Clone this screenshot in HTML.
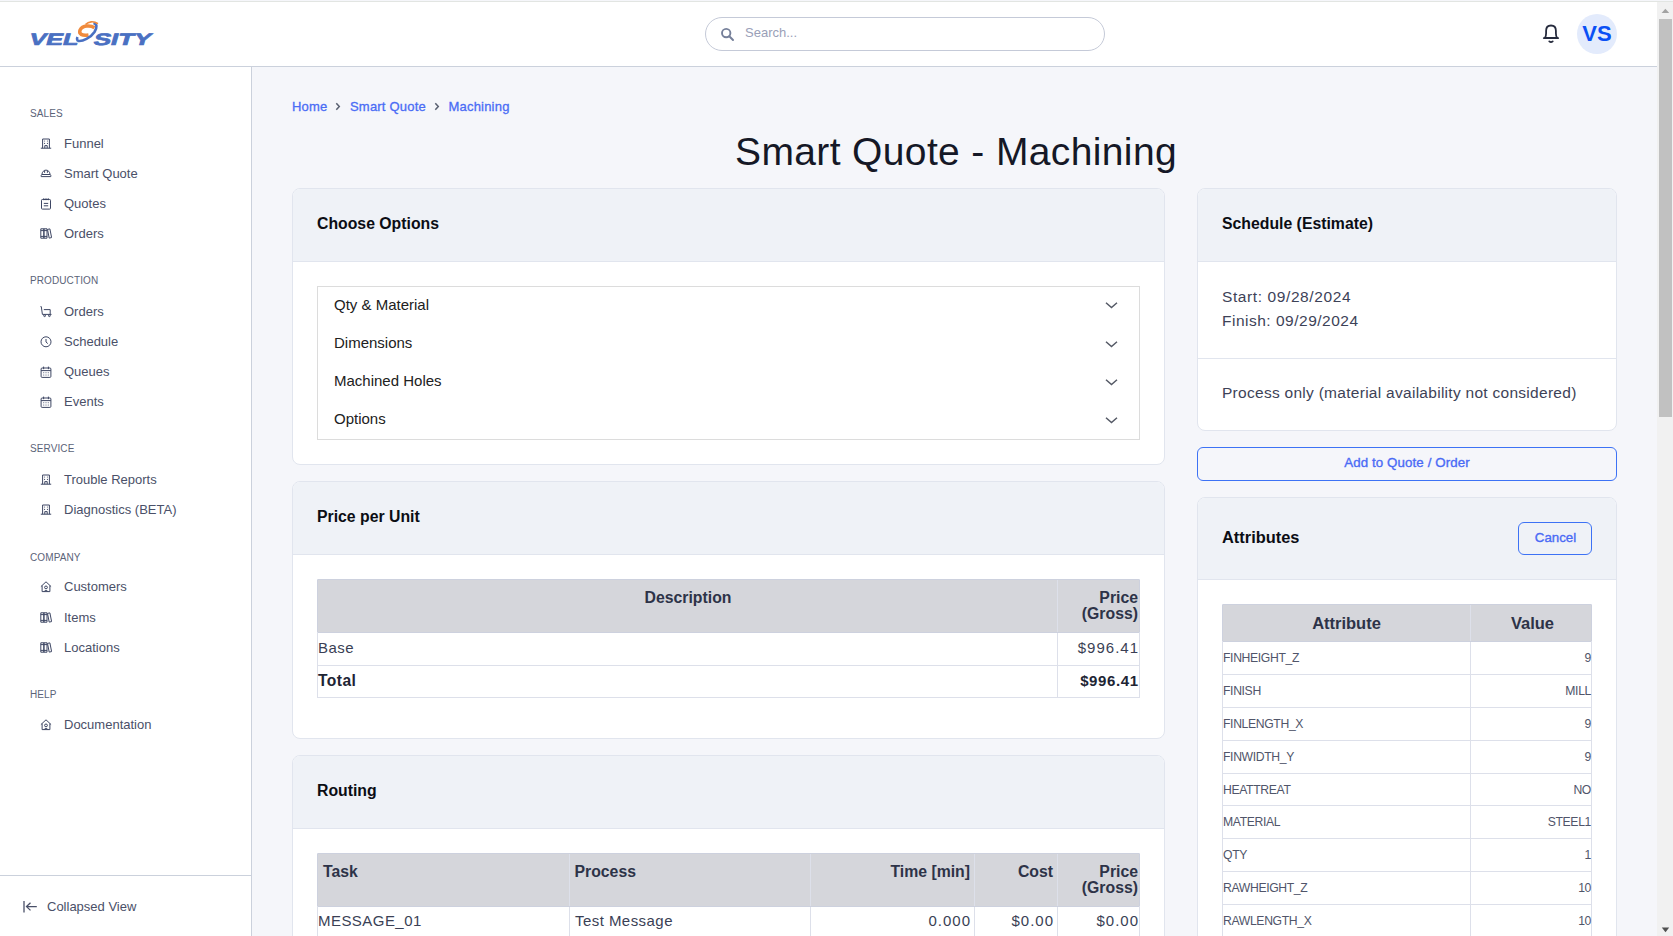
<!DOCTYPE html>
<html><head><meta charset="utf-8">
<style>
*{box-sizing:border-box;margin:0;padding:0}
html,body{width:1673px;height:936px;overflow:hidden;background:#f5f6fa;font-family:"Liberation Sans",sans-serif}
.abs{position:absolute}
#topline{left:0;top:1px;width:1673px;height:1px;background:#e2e5e2}
#header{left:0;top:2px;width:1657px;height:64px;background:#fff}
#hborder{left:0;top:66px;width:1657px;height:1px;background:#cbd1dc}
#sidebar{left:0;top:67px;width:251px;height:869px;background:#fff}
#sborder{left:251px;top:67px;width:1px;height:869px;background:#cbd1dc}
#scroll{left:1657px;top:2px;width:16px;height:934px;background:#f1f1f1}
#thumb{left:1659px;top:19px;width:13px;height:398px;background:#c1c1c1}
.cap{position:absolute;left:30px;font-size:10px;color:#5b6378;letter-spacing:0.1px}
.nav{position:absolute;left:64px;font-size:13px;color:#4a5068;white-space:nowrap}
.ico{position:absolute;left:40px;width:12px;height:12px}
.card{position:absolute;background:#fff;border:1px solid #e1e5ee;border-radius:8px;overflow:hidden}
.chead{position:absolute;left:0;top:0;right:0;background:#eff2f7;border-bottom:1px solid #e1e5ee}
.ctitle{position:absolute;left:24px;font-size:15.8px;font-weight:bold;color:#0b0d14;white-space:nowrap}
.bc{font-size:13px;letter-spacing:0.2px;color:#4a6cf5;-webkit-text-stroke:0.3px #4a6cf5;white-space:nowrap}
.accbox{}
.acc{position:absolute;left:41px;font-size:15px;color:#212121;white-space:nowrap}
.chev{position:absolute;left:812px;margin-top:-1px;width:13px;height:8px;fill:none;stroke:#555a66;stroke-width:1.5}
.tbl{position:absolute;border:1px solid #dde0ea}
.th{position:absolute;background:#d5d6db;box-shadow:0 -1px 0 #cdd1de,-1px 0 0 #cdd1de,1px 0 0 #cdd1de}
.vl{position:absolute;width:1px;background:#dde0ea}
.hl{position:absolute;height:1px;background:#dde0ea}
.tht{position:absolute;font-size:15.8px;font-weight:bold;color:#2d3348;line-height:16px;white-space:nowrap}
.td{position:absolute;font-size:15px;color:#3a3f55;white-space:nowrap;letter-spacing:0.45px}
.num{letter-spacing:1px}
.td.b{font-weight:bold;color:#202433}
.st{position:absolute;left:24px;font-size:15.5px;color:#3d4257;white-space:nowrap}
.btxt{font-size:13.3px;letter-spacing:0.1px;-webkit-text-stroke:0.35px #4a6af5;color:#4a6af5;white-space:nowrap}
.ta{position:absolute;font-size:12.2px;letter-spacing:-0.35px;color:#50556a;white-space:nowrap}
</style></head><body>
<div id="topline" class="abs"></div>
<div id="header" class="abs"></div>
<div id="hborder" class="abs"></div>
<div id="sidebar" class="abs"></div>
<div id="sborder" class="abs"></div>
<div id="scroll" class="abs"></div>
<div id="thumb" class="abs"></div>
<svg class="abs" style="left:1657px;top:0" width="16" height="936" viewBox="0 0 16 936"><path d="M4.6 13H12.2L8.4 8.8Z" fill="#a3a3a3"/><path d="M4.8 927.6H12.2L8.5 932.2Z" fill="#505050"/></svg>


<!-- logo -->
<svg class="abs" style="left:20px;top:14px" width="145" height="36" viewBox="0 0 145 36">
  <g fill="#4a70c2" stroke="#4a70c2" stroke-width="0.7" font-family="Liberation Sans" font-weight="bold" font-size="16.6">
    <g transform="translate(0,30.6) skewX(-16)">
      <text x="8.2" y="0" textLength="49" lengthAdjust="spacingAndGlyphs">VEL</text>
      <text x="72.5" y="0" textLength="57.5" lengthAdjust="spacingAndGlyphs">SITY</text>
    </g>
  </g>
  <g transform="translate(7.5,0.5)"><path d="M67 13.2 C63 10.6, 55 10.6, 52.6 15.5 C50.9 19.6, 54.5 21.4, 61 20.4" fill="none" stroke="#f08a3c" stroke-width="3.5"/>
  <path d="M66 8.5 C69.5 9.5, 70 12.5, 67 17.5 C63 23.5, 55 27, 51 26.5 C49 26, 49.5 23.5, 50 22.5" fill="none" stroke="#4a70c2" stroke-width="2.6"/>
  <path d="M58 10 C61 7, 66 6, 70.4 9.3" fill="none" stroke="#f08a3c" stroke-width="1.7"/></g>
</svg>
<!-- search -->
<div class="abs" style="left:705px;top:17px;width:400px;height:34px;border:1px solid #c5cad8;border-radius:17px;background:#fff"></div>
<svg class="abs" style="left:719px;top:26px" width="18" height="18" viewBox="0 0 18 18">
  <circle cx="7.2" cy="7.1" r="4.2" fill="none" stroke="#76809a" stroke-width="1.9"/>
  <line x1="10.3" y1="10.3" x2="14" y2="14" stroke="#76809a" stroke-width="2" stroke-linecap="round"/>
</svg>
<div class="abs" style="left:745px;top:25px;font-size:13px;color:#9aa0b8;white-space:nowrap">Search...</div>
<!-- bell -->
<svg class="abs" style="left:1540px;top:22px" width="22" height="24" viewBox="0 0 22 24">
  <path d="M4.9 15.9 C5.9 14.6 6.1 13.3 6.1 11.3 L6.1 8.8 C6.1 5.6 8 3.5 11 3.5 C14 3.5 15.9 5.6 15.9 8.8 L15.9 11.3 C15.9 13.3 16.1 14.6 17.1 15.9 Z" fill="none" stroke="#262b3d" stroke-width="1.8" stroke-linejoin="round"/>
  <path d="M3.8 16.1 L18.2 16.1" stroke="#262b3d" stroke-width="1.8" stroke-linecap="round"/>
  <path d="M9.3 19.4 Q11 20.9 12.7 19.4" fill="none" stroke="#262b3d" stroke-width="1.8" stroke-linecap="round"/>
</svg>
<!-- avatar -->
<div class="abs" style="left:1577px;top:14px;width:40px;height:40px;border-radius:50%;background:#e3ebfc"></div>
<div class="abs" style="left:1577px;top:21px;width:40px;text-align:center;font-size:22px;font-weight:bold;color:#0a50f5;letter-spacing:0px">VS</div>

<svg width="0" height="0" style="position:absolute">
<defs>
<g id="i-bld" fill="none" stroke="#3e4764" stroke-width="1"><path d="M2.6 10.2V1H9.4V10.2M0.8 10.2H11.2M4.8 10.2V7.6H7.2V10.2"/><g fill="#3e4764" stroke="none"><circle cx="4.6" cy="3" r="0.55"/><circle cx="7.4" cy="3" r="0.55"/><circle cx="4.6" cy="5.4" r="0.55"/><circle cx="7.4" cy="5.4" r="0.55"/></g></g>
<g id="i-helm" fill="none" stroke="#3e4764" stroke-width="1"><path d="M1.2 8.6H10.8C11 7.4 10.7 6.8 10.1 6.5C9.9 3.9 8.1 2.1 6 2.1C3.9 2.1 2.1 3.9 1.9 6.5C1.3 6.8 1 7.4 1.2 8.6Z"/><path d="M4.6 2.5V4.8M7.4 2.5V4.8M1.9 6.5H10.1"/></g>
<g id="i-note" fill="none" stroke="#3e4764" stroke-width="1"><rect x="1.5" y="1.5" width="9" height="9.6" rx="0.8"/><path d="M3.8 0.2V2.2M6 0.2V2.2M8.2 0.2V2.2M3.8 5.4H8.2M3.8 7.8H8.2"/></g>
<g id="i-book" fill="none" stroke="#3e4764" stroke-width="1"><path d="M0.8 0.8H3.9V10.2H0.8ZM3.9 0.8H7V10.2H3.9ZM7.5 1.4L9.9 0.9L11.6 9.6L9.2 10.1Z M0.8 2.6H7M0.8 8.4H7"/></g>
<g id="i-cart" fill="none" stroke="#3e4764" stroke-width="1"><path d="M0.5 0.6H1.3L2.4 8.4H11.5M3.8 3.6H10.2V8.4"/><circle cx="4.6" cy="9.7" r="0.9"/><circle cx="9.4" cy="9.7" r="0.9"/></g>
<g id="i-clock" fill="none" stroke="#3e4764" stroke-width="1"><circle cx="6" cy="5.8" r="5"/><path d="M6 3V6L7.8 7.6"/></g>
<g id="i-cal" fill="none" stroke="#3e4764" stroke-width="1"><rect x="1.1" y="2" width="9.8" height="9.4" rx="1"/><path d="M3.6 0.6V3.2M8.4 0.6V3.2M1.1 4.6H10.9"/><g fill="#3e4764" stroke="none"><rect x="3.3" y="6.3" width="0.9" height="0.9"/><rect x="5.55" y="6.3" width="0.9" height="0.9"/><rect x="7.8" y="6.3" width="0.9" height="0.9"/><rect x="3.3" y="8.6" width="0.9" height="0.9"/><rect x="5.55" y="8.6" width="0.9" height="0.9"/><rect x="7.8" y="8.6" width="0.9" height="0.9"/></g></g>
<g id="i-home" fill="none" stroke="#3e4764" stroke-width="1"><path d="M0.9 5.6L6 0.8L11.1 5.6M2.1 4.6V10.6H9.9V4.6"/><circle cx="6" cy="6.4" r="1.4"/><path d="M4.2 10.6C4.2 9.2 7.8 9.2 7.8 10.6"/></g>
</defs></svg>
<!-- sidebar items -->
<div class="cap" style="top:106.8px;margin-top:0.8px">SALES</div>
<svg class="ico" style="top:138.1px" viewBox="0 0 12 12"><use href="#i-bld"/></svg><div class="nav" style="top:136.3px">Funnel</div>
<svg class="ico" style="top:168.1px" viewBox="0 0 12 12"><use href="#i-helm"/></svg><div class="nav" style="top:166.3px">Smart Quote</div>
<svg class="ico" style="top:197.9px" viewBox="0 0 12 12"><use href="#i-note"/></svg><div class="nav" style="top:196.1px">Quotes</div>
<svg class="ico" style="top:227.8px" viewBox="0 0 12 12"><use href="#i-book"/></svg><div class="nav" style="top:226.0px">Orders</div>
<div class="cap" style="top:274.3px;margin-top:0.8px">PRODUCTION</div>
<svg class="ico" style="top:306.0px" viewBox="0 0 12 12"><use href="#i-cart"/></svg><div class="nav" style="top:304.2px">Orders</div>
<svg class="ico" style="top:335.6px" viewBox="0 0 12 12"><use href="#i-clock"/></svg><div class="nav" style="top:333.8px">Schedule</div>
<svg class="ico" style="top:365.8px" viewBox="0 0 12 12"><use href="#i-cal"/></svg><div class="nav" style="top:364.0px">Queues</div>
<svg class="ico" style="top:396.0px" viewBox="0 0 12 12"><use href="#i-cal"/></svg><div class="nav" style="top:394.2px">Events</div>
<div class="cap" style="top:442.5px;margin-top:0.8px">SERVICE</div>
<svg class="ico" style="top:473.5px" viewBox="0 0 12 12"><use href="#i-bld"/></svg><div class="nav" style="top:471.7px">Trouble Reports</div>
<svg class="ico" style="top:503.5px" viewBox="0 0 12 12"><use href="#i-bld"/></svg><div class="nav" style="top:501.7px">Diagnostics (BETA)</div>
<div class="cap" style="top:551.0px;margin-top:0.8px">COMPANY</div>
<svg class="ico" style="top:581.1px" viewBox="0 0 12 12"><use href="#i-home"/></svg><div class="nav" style="top:579.3px">Customers</div>
<svg class="ico" style="top:611.6px" viewBox="0 0 12 12"><use href="#i-book"/></svg><div class="nav" style="top:609.8px">Items</div>
<svg class="ico" style="top:642.0px" viewBox="0 0 12 12"><use href="#i-book"/></svg><div class="nav" style="top:640.2px">Locations</div>
<div class="cap" style="top:687.8px;margin-top:0.8px">HELP</div>
<svg class="ico" style="top:718.9px" viewBox="0 0 12 12"><use href="#i-home"/></svg><div class="nav" style="top:717.1px">Documentation</div>
<div class="abs" style="left:0;top:875px;width:251px;height:1px;background:#cbd1dc"></div>
<svg class="abs" style="left:20px;top:898px" width="20" height="18" viewBox="0 0 20 18"><path d="M4 3V14.5M16.8 8.6H6.5M10.5 4.8L6.5 8.6L10.5 12.4" fill="none" stroke="#4a5068" stroke-width="1.3"/></svg>
<div class="nav" style="left:47px;top:899.4px">Collapsed View</div>
<!-- main title -->
<div class="abs bc" style="left:292px;top:99px">Home</div>
<svg class="abs" style="left:334px;top:102px" width="8" height="9" viewBox="0 0 8 9"><path d="M2.3 1.2L5.3 4.5L2.3 7.8" fill="none" stroke="#596070" stroke-width="1.5"/></svg>
<div class="abs bc" style="left:350px;top:99px">Smart Quote</div>
<svg class="abs" style="left:433px;top:102px" width="8" height="9" viewBox="0 0 8 9"><path d="M2.3 1.2L5.3 4.5L2.3 7.8" fill="none" stroke="#596070" stroke-width="1.5"/></svg>
<div class="abs bc" style="left:448.5px;top:99px">Machining</div>
<div class="abs" style="left:735px;top:130px;font-size:39px;letter-spacing:0.37px;color:#151826;white-space:nowrap">Smart Quote - Machining</div>

<!-- card 1 -->
<div class="card" style="left:292px;top:188px;width:873px;height:277px">
  <div class="chead" style="height:73px"><div class="ctitle" style="top:25.5px">Choose Options</div></div>
  <div class="abs" style="left:24px;top:97px;width:823px;height:154px;border:1px solid #dcdcdc"></div>
  <div class="acc" style="top:107px">Qty &amp; Material</div>
  <div class="acc" style="top:145px">Dimensions</div>
  <div class="acc" style="top:183px">Machined Holes</div>
  <div class="acc" style="top:221px">Options</div>
  <svg class="chev" style="top:113px" viewBox="0 0 13 8"><path d="M1 1.8L6.5 6.6L12 1.8"/></svg>
  <svg class="chev" style="top:151.5px" viewBox="0 0 13 8"><path d="M1 1.8L6.5 6.6L12 1.8"/></svg>
  <svg class="chev" style="top:189.5px" viewBox="0 0 13 8"><path d="M1 1.8L6.5 6.6L12 1.8"/></svg>
  <svg class="chev" style="top:227.5px" viewBox="0 0 13 8"><path d="M1 1.8L6.5 6.6L12 1.8"/></svg>
</div>

<!-- card 2 -->
<div class="card" style="left:292px;top:481px;width:873px;height:258px">
  <div class="chead" style="height:73px"><div class="ctitle" style="top:25.5px">Price per Unit</div></div>
  <div class="tbl" style="left:24px;top:97px;width:823px;height:119px">
    <div class="th" style="left:0;top:0;width:821px;height:52px"></div>
    <div class="vl" style="left:739px;top:0;height:117px"></div>
    <div class="hl" style="left:0;top:52px;width:821px;background:#cdd1de"></div>
    <div class="hl" style="left:0;top:85px;width:821px"></div>
    <div class="tht" style="left:0;top:10px;width:740px;text-align:center">Description</div>
    <div class="tht" style="left:740px;top:10px;width:80px;text-align:right">Price<br>(Gross)</div>
    <div class="td" style="left:0px;top:58.5px">Base</div>
    <div class="td num" style="left:740px;top:59px;width:81px;text-align:right">$996.41</div>
    <div class="td b" style="left:0px;top:92px;font-size:15.6px">Total</div>
    <div class="td b num" style="left:740px;top:92px;width:80.6px;text-align:right;letter-spacing:0.6px">$996.41</div>
  </div>
</div>

<!-- card 3 -->
<div class="card" style="left:292px;top:755px;width:873px;height:300px">
  <div class="chead" style="height:73px"><div class="ctitle" style="top:25.5px">Routing</div></div>
  <div class="tbl" style="left:24px;top:97px;width:823px;height:200px">
    <div class="th" style="left:0;top:0;width:821px;height:52px"></div>
    <div class="vl" style="left:251px;top:0;height:198px"></div>
    <div class="vl" style="left:492px;top:0;height:198px"></div>
    <div class="vl" style="left:656px;top:0;height:198px"></div>
    <div class="vl" style="left:739px;top:0;height:198px"></div>
    <div class="hl" style="left:0;top:52px;width:821px;background:#cdd1de"></div>
    <div class="tht" style="left:5px;top:10px">Task</div>
    <div class="tht" style="left:256.5px;top:10px">Process</div>
    <div class="tht" style="left:493px;top:10px;width:159px;text-align:right">Time [min]</div>
    <div class="tht" style="left:657px;top:10px;width:78px;text-align:right">Cost</div>
    <div class="tht" style="left:740px;top:10px;width:80px;text-align:right">Price<br>(Gross)</div>
    <div class="td" style="left:0px;top:58px">MESSAGE_01</div>
    <div class="td" style="left:257px;top:58px">Test Message</div>
    <div class="td num" style="left:493px;top:58px;width:160px;text-align:right">0.000</div>
    <div class="td num" style="left:657px;top:58px;width:79px;text-align:right">$0.00</div>
    <div class="td num" style="left:740px;top:58px;width:81px;text-align:right">$0.00</div>
  </div>
</div>

<!-- right: schedule -->
<div class="card" style="left:1197px;top:188px;width:420px;height:243px">
  <div class="chead" style="height:73px"><div class="ctitle" style="top:25.5px">Schedule (Estimate)</div></div>
  <div class="st" style="top:99px;letter-spacing:0.6px">Start: 09/28/2024</div>
  <div class="st" style="top:123px;letter-spacing:0.5px">Finish: 09/29/2024</div>
  <div class="hl" style="left:0;top:169px;width:420px;background:#e1e5ee"></div>
  <div class="st" style="top:195px;letter-spacing:0.28px">Process only (material availability not considered)</div>
</div>
<div class="abs" style="left:1197px;top:447px;width:420px;height:34px;border:1px solid #3d72f5;border-radius:6px"></div>
<div class="abs btxt" style="left:1197px;top:455px;width:420px;text-align:center">Add to Quote / Order</div>

<!-- right: attributes -->
<div class="card" style="left:1197px;top:497px;width:420px;height:520px">
  <div class="chead" style="height:82px"><div class="ctitle" style="top:30px;font-size:16.4px">Attributes</div></div>
  <div class="abs" style="left:320px;top:24px;width:74px;height:33px;border:1px solid #3d72f5;border-radius:6px;background:#eff2f7"></div>
  <div class="abs btxt" style="left:320.5px;top:31.5px;letter-spacing:0;width:74px;text-align:center">Cancel</div>
  <div class="tbl" style="left:24px;top:106px;width:370px;height:420px">
    <div class="th" style="left:0;top:0;width:368px;height:36px"></div>
    <div class="vl" style="left:247px;top:0;height:420px"></div>
    <div class="hl" style="left:0;top:36px;width:368px;background:#cdd1de"></div>
    <div class="tht" style="left:0;top:9.5px;width:247px;text-align:center;font-size:16.5px">Attribute</div>
    <div class="tht" style="left:249px;top:9.5px;width:121px;text-align:center;font-size:16.5px">Value</div>
    <div class="hl" style="left:0;top:69px;width:368px"></div>
    <div class="ta" style="left:0px;top:45.5px">FINHEIGHT_Z</div><div class="ta" style="left:247px;top:45.5px;width:121px;text-align:right">9</div>
    <div class="hl" style="left:0;top:102px;width:368px"></div>
    <div class="ta" style="left:0px;top:78.5px">FINISH</div><div class="ta" style="left:247px;top:78.5px;width:121px;text-align:right">MILL</div>
    <div class="hl" style="left:0;top:135px;width:368px"></div>
    <div class="ta" style="left:0px;top:111.5px">FINLENGTH_X</div><div class="ta" style="left:247px;top:111.5px;width:121px;text-align:right">9</div>
    <div class="hl" style="left:0;top:168px;width:368px"></div>
    <div class="ta" style="left:0px;top:144.5px">FINWIDTH_Y</div><div class="ta" style="left:247px;top:144.5px;width:121px;text-align:right">9</div>
    <div class="hl" style="left:0;top:200px;width:368px"></div>
    <div class="ta" style="left:0px;top:177.5px">HEATTREAT</div><div class="ta" style="left:247px;top:177.5px;width:121px;text-align:right">NO</div>
    <div class="hl" style="left:0;top:233px;width:368px"></div>
    <div class="ta" style="left:0px;top:209.5px">MATERIAL</div><div class="ta" style="left:247px;top:209.5px;width:121px;text-align:right">STEEL1</div>
    <div class="hl" style="left:0;top:266px;width:368px"></div>
    <div class="ta" style="left:0px;top:242.5px">QTY</div><div class="ta" style="left:247px;top:242.5px;width:121px;text-align:right">1</div>
    <div class="hl" style="left:0;top:299px;width:368px"></div>
    <div class="ta" style="left:0px;top:275.5px">RAWHEIGHT_Z</div><div class="ta" style="left:247px;top:275.5px;width:121px;text-align:right">10</div>
    <div class="hl" style="left:0;top:332px;width:368px"></div>
    <div class="ta" style="left:0px;top:308.5px">RAWLENGTH_X</div><div class="ta" style="left:247px;top:308.5px;width:121px;text-align:right">10</div>
    <div class="hl" style="left:0;top:365px;width:368px"></div>
    <div class="ta" style="left:0px;top:341.5px">RAWWIDTH_Y</div><div class="ta" style="left:247px;top:341.5px;width:121px;text-align:right">10</div>
  </div>
</div>
</body></html>
